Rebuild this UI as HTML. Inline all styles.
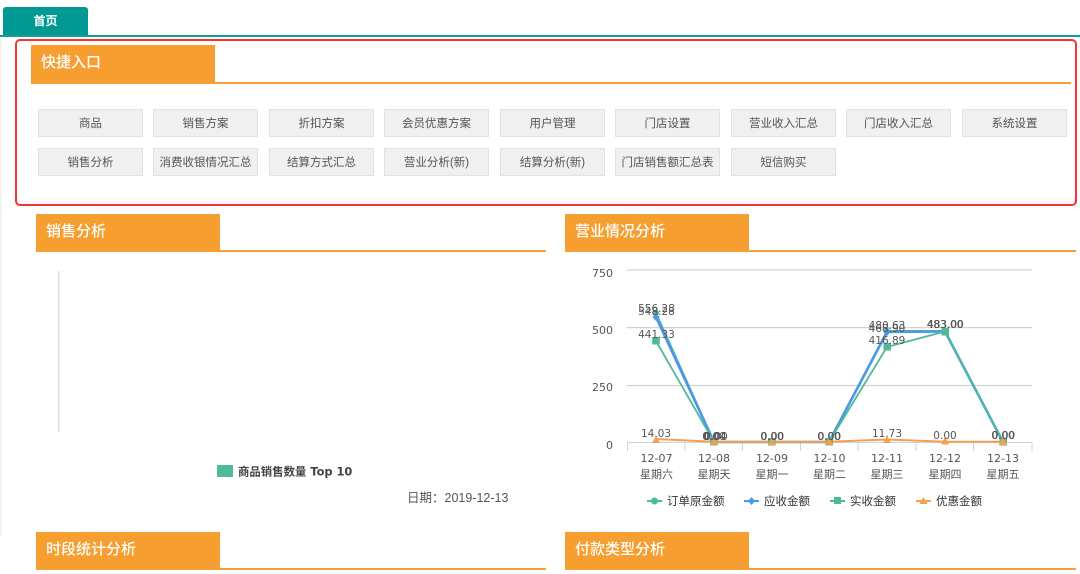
<!DOCTYPE html>
<html lang="zh">
<head>
<meta charset="utf-8">
<style>
html,body{margin:0;padding:0;background:#fff;}
body{position:relative;width:1080px;height:574px;overflow:hidden;font-family:"Liberation Sans","Noto Sans CJK SC",sans-serif;}
#w{position:absolute;left:0;top:0;width:1080px;height:574px;filter:blur(0.35px);}
.a{position:absolute;}
.tab{left:3px;top:7px;width:85px;height:29px;background:#009a93;border-radius:3px 3px 0 0;color:#fff;font-size:12px;font-weight:bold;line-height:29px;text-align:center;}
.teal{left:0;top:35px;width:1080px;height:2px;background:#12a096;}
.side{left:0;top:37px;width:2px;height:499px;background:#f4f4f4;}
.red{left:15px;top:39px;width:1058px;height:163px;border:2px solid #f5342f;border-radius:5px;}
.hd{background:#f69e2f;color:#fff;font-size:15px;line-height:36px;padding-left:10px;box-sizing:border-box;width:184px;height:38px;font-weight:500;}
.ln{height:2px;background:#f7a035;}
.btn{width:105px;height:28px;background:#f0f0f0;border:1px solid #e2e2e2;box-sizing:border-box;color:#555;font-size:11.5px;line-height:28px;text-align:center;white-space:nowrap;}
svg{position:absolute;left:0;top:0;}
svg text{font-family:"DejaVu Sans","Noto Sans CJK SC",sans-serif;}
</style>
</head>
<body>
<div id="w">
<div class="a tab">首页</div>
<div class="a teal"></div>
<div class="a side"></div>
<div class="a red"></div>

<div class="a hd" style="left:31px;top:45px;">快捷入口</div>
<div class="a ln" style="left:31px;top:82px;width:1040px;"></div>

<div class="a btn" style="left:38px;top:109px;">商品</div>
<div class="a btn" style="left:153px;top:109px;">销售方案</div>
<div class="a btn" style="left:269px;top:109px;">折扣方案</div>
<div class="a btn" style="left:384px;top:109px;">会员优惠方案</div>
<div class="a btn" style="left:500px;top:109px;">用户管理</div>
<div class="a btn" style="left:615px;top:109px;">门店设置</div>
<div class="a btn" style="left:731px;top:109px;">营业收入汇总</div>
<div class="a btn" style="left:846px;top:109px;">门店收入汇总</div>
<div class="a btn" style="left:962px;top:109px;">系统设置</div>
<div class="a btn" style="left:38px;top:148px;">销售分析</div>
<div class="a btn" style="left:153px;top:148px;">消费收银情况汇总</div>
<div class="a btn" style="left:269px;top:148px;">结算方式汇总</div>
<div class="a btn" style="left:384px;top:148px;">营业分析(新)</div>
<div class="a btn" style="left:500px;top:148px;">结算分析(新)</div>
<div class="a btn" style="left:615px;top:148px;">门店销售额汇总表</div>
<div class="a btn" style="left:731px;top:148px;">短信购买</div>

<div class="a hd" style="left:36px;top:214px;">销售分析</div>
<div class="a ln" style="left:36px;top:250px;width:510px;"></div>
<div class="a hd" style="left:565px;top:214px;">营业情况分析</div>
<div class="a ln" style="left:565px;top:250px;width:511px;"></div>
<div class="a hd" style="left:36px;top:532px;">时段统计分析</div>
<div class="a ln" style="left:36px;top:568px;width:510px;"></div>
<div class="a hd" style="left:565px;top:532px;">付款类型分析</div>
<div class="a ln" style="left:565px;top:568px;width:511px;"></div>

<svg width="1080" height="574" viewBox="0 0 1080 574" xmlns="http://www.w3.org/2000/svg">
  <!-- left chart -->
  <rect x="58" y="271" width="1.3" height="161" fill="#d5dde6"/>
  <rect x="217" y="465" width="16" height="12" fill="#4fba9b"/>
  <text x="238" y="475.5" font-size="11.4" font-weight="bold" fill="#444">商品销售数量 Top 10</text>
  <text x="407" y="502" font-size="12.5" fill="#555" style="font-family:'Liberation Sans','Noto Sans CJK SC',sans-serif">日期：2019-12-13</text>

  <!-- grid -->
  <g stroke="#d2d2d2" stroke-width="1.2">
    <line x1="627" y1="270" x2="1032" y2="270"/>
    <line x1="627" y1="327.6" x2="1032" y2="327.6"/>
    <line x1="627" y1="385.5" x2="1032" y2="385.5"/>
  </g>
  <g stroke="#c3d4e4" stroke-width="1" fill="none">
    <line x1="627" y1="442.5" x2="1032" y2="442.5"/>
    <line x1="627.5" y1="442" x2="627.5" y2="451"/>
    <line x1="685" y1="442" x2="685" y2="451"/>
    <line x1="742.5" y1="442" x2="742.5" y2="451"/>
    <line x1="800.5" y1="442" x2="800.5" y2="451"/>
    <line x1="858" y1="442" x2="858" y2="451"/>
    <line x1="916" y1="442" x2="916" y2="451"/>
    <line x1="973.5" y1="442" x2="973.5" y2="451"/>
    <line x1="1032" y1="442" x2="1032" y2="451"/>
  </g>

  <!-- y labels -->
  <g font-size="11" fill="#555" text-anchor="end">
    <text x="613" y="277">750</text>
    <text x="613" y="334">500</text>
    <text x="613" y="391">250</text>
    <text x="613" y="449">0</text>
  </g>

  <!-- lines -->
  <g fill="none" stroke-linejoin="round">
    <polyline points="656,313 714,442 772,442 829,442 887,331 945,331 1003,442" stroke="#4fba9b" stroke-width="2"/>
    <polyline points="656,317 714,442 772,442 829,442 887,332 945,331.5 1003,442" stroke="#4e97e8" stroke-width="2.6"/>
    <polyline points="656,341 714,442 772,442 829,442 887,347 945,331.5 1003,442" stroke="#4fba9b" stroke-width="1.8"/>
    <polyline points="656,439 714,441.7 772,441.7 829,441.7 887,439.5 945,441.7 1003,441.7" stroke="#f79f50" stroke-width="2"/>
  </g>

  <!-- markers -->
  <g fill="#4fba9b">
    <circle cx="656" cy="313" r="3"/><circle cx="887" cy="331" r="3"/>
    <rect x="652.2" y="337" width="7.5" height="7.5"/>
    <rect x="710" y="438" width="7.5" height="7.5"/>
    <rect x="768" y="438" width="7.5" height="7.5"/>
    <rect x="825.5" y="438" width="7.5" height="7.5"/>
    <rect x="883.5" y="343" width="7.5" height="7.5"/>
    <rect x="941.5" y="328" width="7.5" height="7.5"/>
    <rect x="999.5" y="438" width="7.5" height="7.5"/>
  </g>
  <g fill="#4e97e8">
    <path d="M656 313l3.5 4-3.5 4-3.5-4z"/>
    <path d="M887 328l3.5 4-3.5 4-3.5-4z"/>
  </g>
  <g fill="#f79f50">
    <path d="M656 436l4 7h-8z"/>
    <path d="M714 437l4.5 8h-9z"/>
    <path d="M772 437l4.5 8h-9z"/>
    <path d="M829 437l4.5 8h-9z"/>
    <path d="M887 436l4 7h-8z"/>
    <path d="M945 437l4 7.5h-8z"/>
    <path d="M1003 437l4.5 8h-9z"/>
  </g>

  <!-- data labels -->
  <g font-size="10.5" fill="#555" text-anchor="middle">
    <text x="656.5" y="312">556.28</text>
    <text x="656.5" y="315">548.28</text>
    <text x="656.5" y="338">441.33</text>
    <text x="656" y="437">14.03</text>
    <text x="714" y="440">0.00</text><text x="715" y="440">0.04</text><text x="716" y="440">0.00</text>
    <text x="772" y="440">0.00</text><text x="772.5" y="440">0.00</text>
    <text x="829" y="440">0.00</text><text x="829.5" y="440">0.00</text>
    <text x="887" y="329">480.63</text>
    <text x="887" y="332">468.90</text>
    <text x="887" y="344">416.89</text>
    <text x="887" y="437">11.73</text>
    <text x="945" y="328">483.00</text><text x="945.5" y="328">483.00</text>
    <text x="945" y="439">0.00</text>
    <text x="1003" y="439">0.00</text><text x="1003.5" y="439">0.00</text>
  </g>

  <!-- x labels -->
  <g font-size="11" fill="#555" text-anchor="middle">
    <text x="656.5" y="462">12-07</text>
    <text x="714" y="462">12-08</text>
    <text x="772" y="462">12-09</text>
    <text x="829.5" y="462">12-10</text>
    <text x="887" y="462">12-11</text>
    <text x="945" y="462">12-12</text>
    <text x="1003" y="462">12-13</text>
    <text x="656.5" y="478">星期六</text>
    <text x="714" y="478">星期天</text>
    <text x="772" y="478">星期一</text>
    <text x="829.5" y="478">星期二</text>
    <text x="887" y="478">星期三</text>
    <text x="945" y="478">星期四</text>
    <text x="1003" y="478">星期五</text>
  </g>

  <!-- legend -->
  <g>
    <rect x="647" y="500" width="15" height="2" fill="#4fba9b"/><circle cx="654.5" cy="501" r="3.5" fill="#4fba9b"/>
    <rect x="744" y="500" width="15" height="2" fill="#4e97e8"/><path d="M751.5 497l3.5 4-3.5 4-3.5-4z" fill="#4e97e8"/>
    <rect x="830" y="500" width="15" height="2" fill="#4fba9b"/><rect x="834" y="497" width="7" height="7" fill="#4fba9b"/>
    <rect x="916" y="500" width="15" height="2" fill="#f79f50"/><path d="M923.5 497l4 7h-8z" fill="#f79f50"/>
    <g font-size="11.5" fill="#333">
      <text x="667" y="505">订单原金额</text>
      <text x="764" y="505">应收金额</text>
      <text x="850" y="505">实收金额</text>
      <text x="936" y="505">优惠金额</text>
    </g>
  </g>
</svg>
</div>
</body>
</html>
